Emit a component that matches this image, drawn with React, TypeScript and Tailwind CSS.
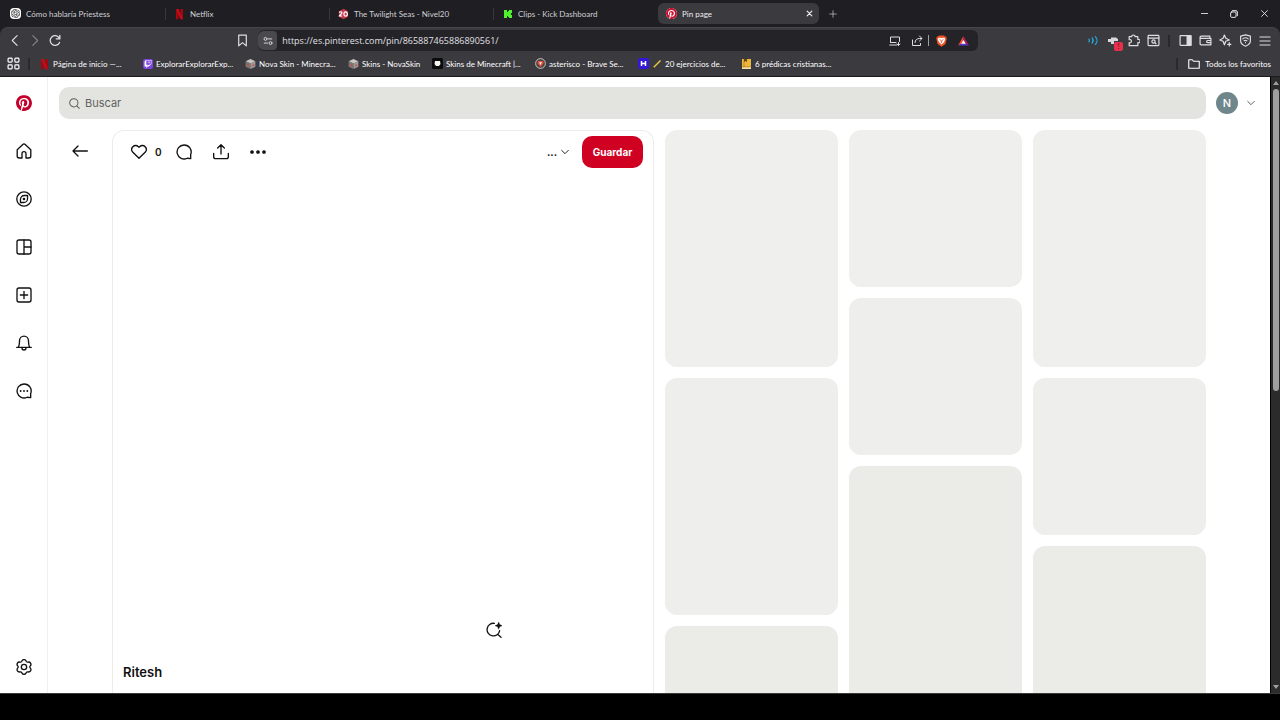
import type { ReactNode } from "react";
import { SiOpenai, SiTwitch, SiPinterest } from "react-icons/si";

type IconProps = { size?: number; sw?: number; children: ReactNode; className?: string };

function Icon({ size = 16, sw = 2, children, className }: IconProps) {
  return (
    <svg
      width={size}
      height={size}
      viewBox="0 0 24 24"
      fill="none"
      stroke="currentColor"
      strokeWidth={sw}
      strokeLinecap="round"
      strokeLinejoin="round"
      className={className}
      aria-hidden="true"
    >
      {children}
    </svg>
  );
}

const NetflixMark = () => (
  <svg width="11" height="12" viewBox="0 0 11 12" aria-hidden="true">
    <path d="M2 1h2.6v10L2 11.5z" fill="#a5060f" />
    <path d="M6.4 1H9v10.5L6.4 11z" fill="#a5060f" />
    <path d="M2 1h2.6L9 11.5 6.4 11z" fill="#c40d18" />
  </svg>
);

const CubeMark = () => (
  <svg width="12" height="12" viewBox="0 0 12 12" aria-hidden="true">
    <path d="M6 .5 11.3 3 6 5.5.7 3z" fill="#c9c6c4" />
    <path d="M.7 3 6 5.5v6L.7 9z" fill="#7d7875" />
    <path d="M11.3 3 6 5.5v6L11.3 9z" fill="#a39a97" />
    <path d="M2 5.5 4.5 7v1.6L2 7.4zM8 7l2-1v2L8 9z" fill="#b8544f" />
  </svg>
);

const OpenAiMark = () => (
  <span className="flex size-[11px] items-center justify-center rounded-sm bg-white text-[#222]">
    <SiOpenai size={9} />
  </span>
);

const D20Mark = () => (
  <svg width="12" height="12" viewBox="0 0 12 12" aria-hidden="true">
    <path d="M6 .3 11 3v6l-5 2.700L1 9V3z" fill="#c2384a" />
    <path d="M1.300 4.600c.3-1.300 3-1.500 3 .1C4.300 6 1.600 7 1.400 8.200h3.200M8.300 3.600c-2.500 0-2.500 4.800 0 4.800s2.500-4.800 0-4.800z" fill="none" stroke="#fff" strokeWidth="1.300" />
  </svg>
);

const KickMark = () => (
  <svg width="10" height="10" viewBox="0 0 10 10" aria-hidden="true">
    <path d="M1 1h3v2h1V2h1V1h3v3H8v2h1v3H6V8H5V7H4v2H1z" fill="#4cf52a" />
  </svg>
);

const PinMark = ({ size }: { size: number }) => (
  <span className="rounded-full bg-white text-[#c8102e]">
    <SiPinterest size={size} />
  </span>
);

const tabs = [
  { label: "Cómo hablaría Priestess", icon: <OpenAiMark /> },
  { label: "Netflix", icon: <NetflixMark /> },
  { label: "The Twilight Seas - Nivel20", icon: <D20Mark /> },
  { label: "Clips - Kick Dashboard", icon: <KickMark /> },
];

function TabStrip() {
  return (
    <header className="flex h-[27px] shrink-0 items-center bg-[#1f1e23] pl-0.5 pr-px text-[8px] text-[#d0d0d4]">
      {tabs.map((t, i) => (
        <div key={t.label} className="flex w-41 items-center">
          <button className="flex h-5 min-w-0 flex-1 items-center gap-[5px] pl-2 text-left whitespace-nowrap">
            <span className="flex w-[11px] shrink-0 justify-center">{t.icon}</span>
            {t.label}
          </button>
          {i < 3 && <span className="h-3 w-px bg-[#38373c]" />}
        </div>
      ))}
      <div className="flex h-[21px] w-[161px] items-center rounded-md bg-[#3b3a3f] pr-1 text-[#eeeef0]">
        <button className="flex min-w-0 flex-1 items-center gap-[5px] pl-2 text-left">
          <PinMark size={11} />
          Pin page
        </button>
        <button aria-label="Cerrar pestaña" className="p-0.5">
          <Icon size={7} sw={4}><path d="M4 4l16 16M20 4 4 20" /></Icon>
        </button>
      </div>
      <button aria-label="Nueva pestaña" className="ml-2 p-0.5">
        <Icon size={8}><path d="M12 2v20M2 12h20" /></Icon>
      </button>
      <div className="ml-auto flex text-[#e8e8ea]">
        <button aria-label="Minimizar" className="flex h-6 w-[30px] items-center justify-center">
          <Icon size={7} sw={3}><path d="M1 12h22" /></Icon>
        </button>
        <button aria-label="Restaurar" className="flex h-6 w-[30px] items-center justify-center">
          <Icon size={8} sw={3}>
            <rect x="2" y="6" width="16" height="16" rx="3" />
            <path d="M7 2h11a4 4 0 0 1 4 4v11" />
          </Icon>
        </button>
        <button aria-label="Cerrar" className="flex h-6 w-[30px] items-center justify-center">
          <Icon size={7} sw={3}><path d="M2 2l20 20M22 2 2 22" /></Icon>
        </button>
      </div>
    </header>
  );
}

function ToolButton({ label, children, dim }: { label: string; children: ReactNode; dim?: boolean }) {
  return (
    <button
      aria-label={label}
      className={dim ? "flex h-5 w-5 shrink-0 items-center justify-center text-[#85858a]" : "flex h-5 w-5 shrink-0 items-center justify-center text-[#dedee2]"}
    >
      {children}
    </button>
  );
}

function Toolbar() {
  return (
    <div className="flex h-[26px] shrink-0 items-center rounded-t-lg border-t border-[#46454a] bg-[#3b3a3f] px-[5px]">
      <ToolButton label="Atrás"><Icon size={13}><path d="M15 3 6 12l9 9" /></Icon></ToolButton>
      <ToolButton label="Adelante" dim><Icon size={13}><path d="M7 3l9 9-9 9" /></Icon></ToolButton>
      <ToolButton label="Recargar">
        <Icon size={13} sw={2.4}><path d="M19.500 15.500A9 9 0 1 1 19 7.500M20 2.500v6.500h-6.500" /></Icon>
      </ToolButton>
      <div className="flex-[168]" />
      <ToolButton label="Añadir a favoritos">
        <Icon size={13} sw={2.2}><path d="M5 2h14v20l-7-6-7 6z" /></Icon>
      </ToolButton>
      <div className="ml-1.5 flex h-[21px] flex-[719] items-center rounded-md bg-[#242328] pr-1">
        <button aria-label="Información del sitio" className="flex h-[19px] w-[19px] items-center justify-center rounded-l-md rounded-r-sm bg-[#4a494e] text-[#dedee2]">
          <Icon size={10} sw={2.2}>
            <circle cx="6" cy="7" r="3.500" />
            <path d="M13 7h8M3 17h8" />
            <circle cx="18" cy="17" r="3.500" />
          </Icon>
        </button>
        <input
          aria-label="Dirección"
          defaultValue="https://es.pinterest.com/pin/865887465886890561/"
          className="h-4 min-w-0 flex-1 bg-transparent pl-[5px] font-['Open_Sans',sans-serif] text-[9px] text-[#e0e0e4] outline-none"
        />
        <ToolButton label="Instalar">
          <Icon size={12}>
            <path d="M3 15V4h18v9M3 15h11M1.500 20h14M19 15v6M16 18l3 3 3-3" />
          </Icon>
        </ToolButton>
        <span className="w-0.5" />
        <ToolButton label="Compartir">
          <Icon size={12}>
            <path d="M3 10v11h16v-4M8 15c0-5 4-8 9-8h4M17 2l5 5-5 5" />
          </Icon>
        </ToolButton>
        <span className="mx-px h-[11px] w-px bg-[#a0a0a4]" />
        <button aria-label="Brave Shields" className="flex h-5 w-6 items-center justify-center">
          <svg width="11" height="12" viewBox="0 0 22 24" aria-hidden="true">
            <path d="M6 1h10l2 2h2l1.500 4L19 18l-8 5.500L3 18 .5 7 2 3h2z" fill="#ee5327" />
            <path d="M4.500 6 9 5.500l2 1 2-1 4.500.5 1 3-3 6-4.500 4L6.500 15l-3-6z" fill="#fff" />
            <path d="M7 9l3 1.500 1 5 1-5L15 9" fill="none" stroke="#ee5327" strokeWidth="1.500" />
          </svg>
        </button>
        <button aria-label="Brave Rewards" className="flex h-5 w-5 items-center justify-center">
          <svg width="11" height="10" viewBox="0 0 22 20" aria-hidden="true">
            <path d="M11 0 0 19l11-6z" fill="#ff4b2b" />
            <path d="M11 0l11 19-11-6z" fill="#9e1f63" />
            <path d="M0 19h22l-11-6z" fill="#5b36d6" />
            <path d="M11 8l4.500 7.500h-9z" fill="#fff" />
          </svg>
        </button>
      </div>
      <div className="flex-[106]" />
      <button aria-label="Audio" className="flex h-5 w-5 shrink-0 items-center justify-center text-[#22aee6]">
        <Icon size={11} sw={2.6}>
          <path d="M2 9c1.500 2 1.500 4 0 6M9 6.500c3 3.500 3 7.500 0 11M16 3.500c5 5 5 12 0 17" />
        </Icon>
      </button>
      <button aria-label="Extensión" className="relative flex h-5 w-5 shrink-0 items-center justify-center text-[#d8d8dc]">
        <svg width="12" height="12" viewBox="0 0 12 12" fill="currentColor" aria-hidden="true">
          <path d="M1 4h3V2.500h5L11 4v2H7v3H4V7H1z" />
        </svg>
        <span className="absolute right-0 bottom-0 flex h-[9px] w-[9px] items-center justify-center rounded-xs bg-[#e5304b] text-[7px] text-[#5c0f1c]">!</span>
      </button>
      <ToolButton label="Extensiones">
        <Icon size={13} sw={2.200}>
          <path d="M4 5h4.500a3.200 3.200 0 1 1 6.400 0H20v5a3.200 3.200 0 1 1 0 6v5.500H4V16a3 3 0 1 0 0-5.500z" />
        </Icon>
      </ToolButton>
      <ToolButton label="Buscar en la página">
        <Icon size={13} sw={2.200}>
          <rect x="2" y="2.500" width="20" height="19" rx="1.500" />
          <path d="M2 7.500h20M14.500 16l2 2" />
          <circle cx="12" cy="14" r="3" />
        </Icon>
      </ToolButton>
      <span className="mx-[5px] h-3 w-0.5 bg-[#29282c]" />
      <ToolButton label="Panel lateral">
        <Icon size={13} sw={2.200}>
          <rect x="2" y="3" width="20" height="18" rx="1" />
          <path d="M15 3h7v18h-7z" fill="currentColor" />
        </Icon>
      </ToolButton>
      <ToolButton label="Cartera">
        <Icon size={13} sw={2.200}>
          <path d="M20 8V4H4a2 2 0 0 0 0 4h18v12H4a2 2 0 0 1-2-2V6M22 12h-6a2 2 0 0 0 0 4h6" />
        </Icon>
      </ToolButton>
      <ToolButton label="Leo">
        <Icon size={13} sw={2.200}>
          <path d="M10 2l2.500 6 6.500 3-6.500 2.500L10 20l-2.500-6.500L1.500 11l6-3z" />
          <path d="M19 16v6M16 19h6" />
        </Icon>
      </ToolButton>
      <ToolButton label="VPN">
        <Icon size={13} sw={2.200}>
          <path d="M12 1.500 21 4v9c0 5-4 7.500-9 9.500-5-2-9-4.500-9-9.500V4z" />
          <path d="M7 9c3-2.500 7-2.500 10 0M9.500 12.500c1.500-1 3.500-1 5 0M12 16v0" />
        </Icon>
      </ToolButton>
      <ToolButton label="Menú"><Icon size={12} sw={2.400}><path d="M2 4h20M2 12h20M2 20h20" /></Icon></ToolButton>
    </div>
  );
}

const bookmarks = [
  { label: "Página de inicio —...", icon: <NetflixMark />, wide: true },
  {
    label: "ExplorarExplorarExp...",
    icon: (
      <span className="flex size-[10px] items-center justify-center rounded-xs bg-[#7d45e0] text-white">
        <SiTwitch size={8} />
      </span>
    ),
    wide: true,
  },
  { label: "Nova Skin - Minecra...", icon: <CubeMark />, wide: true },
  { label: "Skins - NovaSkin", icon: <CubeMark />, wide: false },
  {
    label: "Skins de Minecraft |...",
    icon: (
      <svg width="11" height="11" viewBox="0 0 11 11" aria-hidden="true">
        <rect width="11" height="11" rx="1.500" fill="#0b0b0c" />
        <path d="M3 3h5l.5 3L7 8H4L2.500 6z" fill="#f4f4f4" />
      </svg>
    ),
    wide: true,
  },
  {
    label: "asterisco - Brave Se...",
    icon: (
      <svg width="11" height="11" viewBox="0 0 11 11" aria-hidden="true">
        <circle cx="5.500" cy="5.500" r="4.900" fill="#4a4245" stroke="#c9bfbd" strokeWidth="1" />
        <path d="M3 3h5l.6 2.500L5.500 9 2.400 5.500z" fill="#e2503a" />
        <path d="M4.200 4.300h2.600L5.500 7z" fill="#fff" />
      </svg>
    ),
    wide: true,
  },
  {
    label: "20 ejercicios de...",
    icon: (
      <svg width="11" height="11" viewBox="0 0 11 11" aria-hidden="true">
        <rect width="11" height="11" rx="2" fill="#3517d8" />
        <path d="M3.500 3v5M7.500 3v5M3.500 5.500h4" stroke="#fff" strokeWidth="1.500" />
      </svg>
    ),
    pencil: true,
    wide: true,
  },
  {
    label: "6 prédicas cristianas...",
    icon: (
      <svg width="11" height="12" viewBox="0 0 11 12" aria-hidden="true">
        <path d="M1 1h9v8H1z" fill="#eab63c" />
        <path d="M1 9h9v2H1z" fill="#f2dfa6" />
        <path d="M1 8.800h9M3 1v7.500" stroke="#b5791b" strokeWidth=".7" />
        <path d="M3 1h3v3l-1.500-1L3 4z" fill="#6b4310" />
      </svg>
    ),
    wide: true,
  },
];

function BookmarksBar() {
  return (
    <nav aria-label="Favoritos" className="flex h-6 shrink-0 items-center border-b border-[#1b1a1d] bg-[#3b3a3f] pb-0.5 pl-[7px] pr-[9px] text-[8px] text-white">
      <button aria-label="Grupos de pestañas">
        <Icon size={13} sw={2.200}>
          <rect x="2" y="2" width="7.500" height="7.500" rx="1.500" />
          <rect x="14.500" y="2" width="7.500" height="7.500" rx="1.500" />
          <rect x="2" y="14.500" width="7.500" height="7.500" rx="1.500" />
          <rect x="14.500" y="14.500" width="7.500" height="7.500" rx="1.500" />
        </Icon>
      </button>
      <span className="ml-2 mr-[9px] h-3 w-0.5 bg-[#2a292d]" />
      {bookmarks.map((b) => (
        <a
          key={b.label}
          href="#"
          className={b.wide ? "flex w-[103px] shrink-0 items-center gap-[3px] whitespace-nowrap" : "flex w-[84px] shrink-0 items-center gap-[3px] whitespace-nowrap"}
        >
          <span className="flex w-[11px] shrink-0 justify-center">{b.icon}</span>
          {b.pencil && (
            <svg width="10" height="10" viewBox="0 0 10 10" aria-hidden="true">
              <path d="M1.500 8.500 8.500 1.500" stroke="#e9c93d" strokeWidth="1.500" />
              <path d="M1 9l1-.5" stroke="#222" strokeWidth="1" />
            </svg>
          )}
          {b.label}
        </a>
      ))}
      <span className="ml-auto mr-2.5 h-3 w-0.5 bg-[#2a292d]" />
      <a href="#" className="flex items-center gap-[5px] whitespace-nowrap">
        <Icon size={12} sw={2.200}><path d="M1.500 3.500h7l2.500 3h11.500v14h-21z" /></Icon>
        Todos los favoritos
      </a>
    </nav>
  );
}

const BUBBLE = "M12 1.500a10.500 10.500 0 1 0 4.800 19.900l5.200.600v-6.200A10.500 10.500 0 0 0 12 1.500z";

const sideItems: { label: string; icon: ReactNode }[] = [
  {
    label: "Inicio",
    icon: (
      <Icon>
        <path d="M1.800 10 10.200 2.200a2.700 2.700 0 0 1 3.600 0L22.200 10v9.500a3 3 0 0 1-3 3H15V16a3 3 0 0 0-6 0v6.500H4.800a3 3 0 0 1-3-3z" />
      </Icon>
    ),
  },
  {
    label: "Explorar",
    icon: (
      <Icon>
        <circle cx="12" cy="12" r="10.800" />
        <path d="M17.300 6.700h-4.800A5.800 5.800 0 0 0 6.700 12.500v4.800h4.800a5.800 5.800 0 0 0 5.800-5.800z" />
        <circle cx="12" cy="12" r="1" fill="currentColor" />
      </Icon>
    ),
  },
  {
    label: "Tableros",
    icon: (
      <Icon>
        <rect x="1.500" y="1.500" width="21" height="21" rx="3" />
        <path d="M12 1.500v21M12 12h10.500" />
      </Icon>
    ),
  },
  {
    label: "Crear",
    icon: (
      <Icon>
        <rect x="1.500" y="1.500" width="21" height="21" rx="3" />
        <path d="M12 6.500v11M6.500 12h11" />
      </Icon>
    ),
  },
  {
    label: "Novedades",
    icon: (
      <Icon>
        <path d="M1 18.500h22M3.500 18.500C5.500 15 5 12 5.300 8.500a6.700 6.700 0 0 1 13.400 0c.3 3.500-.2 6.500 1.800 10M9 19.500a3 3 0 0 0 6 0" />
      </Icon>
    ),
  },
  {
    label: "Mensajes",
    icon: (
      <Icon>
        <path d={BUBBLE} />
        <path d="M7 12h.01M12 12h.01M17 12h.01" strokeWidth="2.800" />
      </Icon>
    ),
  },
];

function Sidebar() {
  return (
    <nav aria-label="Pinterest" className="flex w-12 shrink-0 flex-col border-r border-[#f0f0f0] pt-0.5 pb-0.5 text-[#111]">
      <a href="#" aria-label="Pinterest" className="flex h-12 items-center justify-center text-[#c4002b]">
        <SiPinterest size={16} />
      </a>
      {sideItems.map((s) => (
        <a key={s.label} href="#" aria-label={s.label} className="flex h-12 items-center justify-center">
          {s.icon}
        </a>
      ))}
      <button aria-label="Ajustes" className="mt-auto flex h-12 items-center justify-center">
        <Icon>
          <path d="M8.700 3.300a3.500 3.500 0 0 1 6.600 0 2.500 2.500 0 0 0 2.700 1.300 3.500 3.500 0 0 1 3.500 5.700 2.600 2.600 0 0 0 0 3.400 3.500 3.500 0 0 1-3.500 5.700 2.500 2.500 0 0 0-2.700 1.300 3.500 3.500 0 0 1-6.600 0A2.500 2.500 0 0 0 6 19.400a3.500 3.500 0 0 1-3.500-5.700 2.600 2.600 0 0 0 0-3.400A3.500 3.500 0 0 1 6 4.600a2.500 2.500 0 0 0 2.700-1.300z" />
          <circle cx="12" cy="12" r="4" />
        </Icon>
      </button>
    </nav>
  );
}

function CardButton({ label, children }: { label: string; children: ReactNode }) {
  return (
    <button aria-label={label} className="flex h-8 w-[37px] items-center justify-center">
      {children}
    </button>
  );
}

function PinCard() {
  return (
    <article className="flex min-w-0 flex-[540] flex-col rounded-t-xl border border-b-0 border-[#ececea] text-[#111]">
      <div className="flex items-center px-2.5 pt-[5px]">
        <button aria-label="Me gusta" className="flex h-8 w-8 items-center justify-center">
          <Icon>
            <path d="M12 21.500 2.800 12.300a6 6 0 0 1 0-8.300 5.700 5.700 0 0 1 8.200 0l1 1.100L13 4a5.700 5.700 0 0 1 8.200 0 6 6 0 0 1 0 8.300z" />
          </Icon>
        </button>
        <span className="w-2.5 text-[10px] font-semibold">0</span>
        <CardButton label="Comentar">
          <Icon><path d={BUBBLE} /></Icon>
        </CardButton>
        <CardButton label="Compartir">
          <Icon><path d="M12 15V1.500M7 6l5-5 5 5M1 14v5a3 3 0 0 0 3 3h16a3 3 0 0 0 3-3v-5" /></Icon>
        </CardButton>
        <CardButton label="Más acciones">
          <Icon className="fill-current"><circle cx="3" cy="12" r="1.800" /><circle cx="12" cy="12" r="1.800" /><circle cx="21" cy="12" r="1.800" /></Icon>
        </CardButton>
        <button aria-label="Elegir tablero" className="ml-auto mr-[13px] flex h-8 items-center gap-1 text-[10px] font-bold">
          ...
          <Icon size={8} sw={2.800}><path d="M2 7l10 10L22 7" /></Icon>
        </button>
        <button className="h-8 w-[61px] rounded-[10px] bg-[#cf0022] text-[10px] font-bold text-white">Guardar</button>
      </div>
      <div className="flex min-h-0 flex-1 items-end justify-end pr-[147px] pb-[11px]">
        <button aria-label="Búsqueda visual" className="flex size-6 items-center justify-center">
          <Icon>
            <path d="M12.500 2a9.500 9.500 0 1 0 8 11M17.500 18.500l5 4.500" />
            <path d="M19 0l1.600 3.900L24.500 5.500l-3.900 1.600L19 11l-1.600-3.900L13.500 5.500l3.900-1.600z" fill="currentColor" strokeWidth="0.500" />
          </Icon>
        </button>
      </div>
      <h1 className="flex h-10 shrink-0 items-center px-2.5 text-[13px] font-semibold">Ritesh</h1>
    </article>
  );
}

function Grid() {
  return (
    <div className="grid min-w-0 flex-[541] grid-cols-3 gap-[11px]">
      <div className="flex flex-col gap-[11px]">
        <div className="h-[237px] shrink-0 rounded-xl bg-[#efefed]" />
        <div className="h-[237px] shrink-0 rounded-xl bg-[#eeeeec]" />
        <div className="flex-1 rounded-t-xl bg-[#ebebe8]" />
      </div>
      <div className="flex flex-col gap-[11px]">
        <div className="h-[157px] shrink-0 rounded-xl bg-[#efefed]" />
        <div className="h-[157px] shrink-0 rounded-xl bg-[#eeeeec]" />
        <div className="flex-1 rounded-t-xl bg-[#ebebe8]" />
      </div>
      <div className="flex flex-col gap-[11px]">
        <div className="h-[237px] shrink-0 rounded-xl bg-[#efefed]" />
        <div className="h-[157px] shrink-0 rounded-xl bg-[#eeeeec]" />
        <div className="flex-1 rounded-t-xl bg-[#ebebe8]" />
      </div>
    </div>
  );
}

export default function App() {
  return (
    <div className="flex h-screen flex-col overflow-hidden bg-[#1f1e23] font-['Lato',sans-serif]">
      <TabStrip />
      <Toolbar />
      <BookmarksBar />
      <div className="flex min-h-0 flex-1 bg-white font-['Inter',sans-serif]">
        <Sidebar />
        <main className="flex min-w-0 flex-1 flex-col">
          <div className="flex shrink-0 items-center pt-2.5 pr-[15px] pl-[11px]">
            <label className="flex h-8 min-w-0 flex-1 items-center gap-[5px] rounded-[10px] bg-[#e3e4df] px-2.5 text-[#5f5f5c]">
              <Icon size={11} sw={2.200}><circle cx="10.500" cy="10.500" r="9" /><path d="M17 17l5.500 5.500" /></Icon>
              <input aria-label="Buscar" placeholder="Buscar" className="min-w-0 flex-1 bg-transparent text-[11px] outline-none placeholder:text-[#62625f]" />
            </label>
            <button aria-label="Tu perfil" className="ml-2.5 flex size-[22px] items-center justify-center rounded-full bg-[#6f868b] text-[11px] font-medium text-white">N</button>
            <button aria-label="Cuentas" className="ml-[9px] text-[#555]">
              <Icon size={8} sw={2.800}><path d="M2 7l10 10L22 7" /></Icon>
            </button>
          </div>
          <div className="flex min-h-0 flex-1 pt-[11px] pr-16">
            <div className="flex w-16 shrink-0 justify-center">
              <button aria-label="Volver" className="mt-[5px] flex size-8 items-center justify-center text-[#111]">
                <Icon><path d="M23 12H1.500M9 4.500 1.500 12 9 19.500" /></Icon>
              </button>
            </div>
            <PinCard />
            <div className="w-[11px] shrink-0" />
            <Grid />
          </div>
        </main>
        <div className="flex w-2.5 shrink-0 flex-col items-center border-l border-black bg-[#2b2b2c] py-[3px]">
          <svg width="6" height="5" viewBox="0 0 6 5" aria-hidden="true"><path d="M3 1l3 4H0z" fill="#9f9f9f" /></svg>
          <div className="mt-1 mb-[294px] w-1.5 flex-1 rounded-full bg-[#9f9f9f]" />
          <svg width="6" height="5" viewBox="0 0 6 5" aria-hidden="true"><path d="M3 4l3-4H0z" fill="#9f9f9f" /></svg>
        </div>
      </div>
      <footer className="h-[27px] shrink-0 border-t border-[#3a3a3a] bg-black" />
    </div>
  );
}
